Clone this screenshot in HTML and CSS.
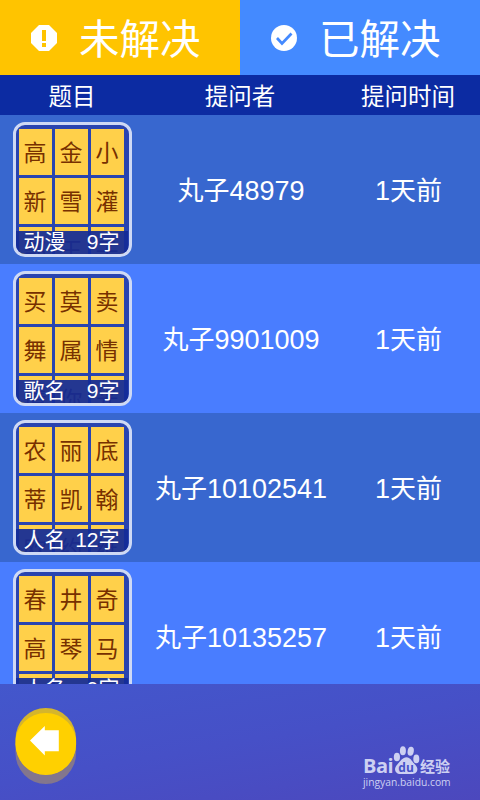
FILE: index.html
```
<!DOCTYPE html>
<html lang="zh-CN">
<head>
<meta charset="utf-8">
<title>题目列表</title>
<link rel="stylesheet" href="styles.css">
</head>
<body>
<div class="app">
  <nav class="tabs">
    <div class="tab tab-open">
      <svg class="tab-icon" viewBox="0 0 26 26"><path fill="#fff" d="M8 0h10l8 8v10l-8 8H8l-8-8V8z"/><path fill="#ffc400" d="M11 5h4v11h-4zM11 18h4v4h-4z"/></svg>
      <span>未解决</span>
    </div>
    <div class="tab tab-done">
      <svg class="tab-icon" viewBox="0 0 26 26"><circle cx="13" cy="13" r="13" fill="#fff"/><path fill="none" stroke="#448aff" stroke-width="2.7" d="M6 13l5 5.500L20.500 8.500"/></svg>
      <span>已解决</span>
    </div>
  </nav>
  <div class="columns head"><span>题目</span><span>提问者</span><span>提问时间</span></div>
  <main class="list">
    <div class="columns row">
      <div class="card">
        <div class="tiles"><i>高</i><i>金</i><i>小</i><i>新</i><i>雪</i><i>灌</i><i>部</i><i>王</i><i>子</i></div>
        <div class="caption"><span>动漫</span><span>9字</span></div>
      </div>
      <span class="cell"><b>丸子</b>48979</span><span class="cell">1<b>天前</b></span>
    </div>
    <div class="columns row alt">
      <div class="card">
        <div class="tiles"><i>买</i><i>莫</i><i>卖</i><i>舞</i><i>属</i><i>情</i><i>情</i><i>你</i><i>光</i></div>
        <div class="caption"><span>歌名</span><span>9字</span></div>
      </div>
      <span class="cell"><b>丸子</b>9901009</span><span class="cell">1<b>天前</b></span>
    </div>
    <div class="columns row">
      <div class="card">
        <div class="tiles"><i>农</i><i>丽</i><i>底</i><i>蒂</i><i>凯</i><i>翰</i><i>欧</i><i>约</i><i>维</i></div>
        <div class="caption"><span>人名</span><span>12字</span></div>
      </div>
      <span class="cell"><b>丸子</b>10102541</span><span class="cell">1<b>天前</b></span>
    </div>
    <div class="columns row alt">
      <div class="card">
        <div class="tiles"><i>春</i><i>井</i><i>奇</i><i>高</i><i>琴</i><i>马</i><i></i><i></i><i></i></div>
        <div class="caption"><span>人名</span><span>9字</span></div>
      </div>
      <span class="cell"><b>丸子</b>10135257</span><span class="cell">1<b>天前</b></span>
    </div>
  </main>
  <footer class="footer">
    <svg class="back" viewBox="0 0 62 77">
      <defs><clipPath id="disc"><path d="M.5 31a30.300 31 0 0 1 60.600 0v5a30.300 31 0 0 1-60.600 0z"/></clipPath></defs>
      <path fill="#83768d" d="M.5 36h60.600v9a30.300 31 0 0 1-60.600 0z"/>
      <g clip-path="url(#disc)"><path fill="#d5b52c" d="M0 0h62v67H0z"/><ellipse cx="30.800" cy="36" rx="30.800" ry="31" fill="#ffd000"/></g>
      <path fill="#fff" d="M15 32.500L29.800 18v4.300h14v21h-14v4.200z"/>
    </svg>
    <div class="brand">
      <div class="brand-main">
        <span class="bai">Bai</span>
        <svg class="paw" viewBox="0 0 26 29"><g fill="#cdd0f2"><ellipse cx="3.400" cy="11" rx="3.100" ry="4.300"/><ellipse cx="9.400" cy="4.800" rx="3" ry="4.500"/><ellipse cx="17.200" cy="5.200" rx="3.100" ry="4.500" transform="rotate(10 17.200 5.200)"/><ellipse cx="22.800" cy="12.900" rx="3" ry="4.300"/><path d="M13 11.200c4 0 5.500 4.500 8.500 7.300 4.500 4.200 2 9.500-2.500 9.500H6.800c-5 0-7.300-5.200-3-9.600C6.500 15.500 9 11.200 13 11.200z"/></g><text class="du" x="12.600" y="25.500" text-anchor="middle">du</text></svg>
        <span class="exp">经验</span>
      </div>
      <div class="brand-url">jingyan.baidu.com</div>
    </div>
  </footer>
</div>
</body>
</html>
```
FILE: styles.css
```
* { box-sizing: border-box; }
body { margin: 0; }
.app {
  width: 480px; height: 800px; overflow: hidden;
  display: flex; flex-direction: column;
  color: #fff;
  font-family: "Liberation Sans", "Noto Sans CJK SC", sans-serif;
}
.tabs { display: flex; height: 75px; flex: none; }
.tab {
  flex: 1; display: flex; align-items: center;
  padding: 5px 0 0 31px; font-size: 40.5px; line-height: 60px; white-space: nowrap;
}
.tab span { margin-left: 22px; }
.tab-open { background: #ffc400; }
.tab-done { background: #448aff; }
.tab-icon { width: 26px; height: 26px; flex: none; margin-top: -5px; }
.columns {
  display: grid; grid-template-columns: 144px 192px 144px;
  justify-items: center; align-items: center; flex: none;
}
.head { height: 40px; background: #0c2ba2; font-size: 23.5px; line-height: 38px; padding-top: 3px; }
.list { height: 569px; overflow: hidden; flex: none; }
.row { height: 149px; background: #3867cf; font-size: 27px; align-items: start; }
.alt { background: #497dff; }
.cell { line-height: 40px; margin-top: 56px; white-space: nowrap; }
.cell b { font-weight: normal; font-size: 26px; }
.row .cell:nth-child(2) { margin-left: 2px; }
.row .cell:last-child { margin-left: 1px; }
.card {
  position: relative; width: 119px; height: 135px; margin-top: 7px;
  border: 3px solid #ced9f5; border-radius: 12px; background: #2944b0;
  overflow: hidden; padding: 4px 0 0 3px;
}
.tiles {
  display: grid; grid-template-columns: repeat(3, 33px);
  grid-auto-rows: 46px; gap: 3px;
}
.tiles i {
  background: #ffd04a; color: #773000; font-style: normal;
  font-size: 23px; line-height: 48px; height: 46px; text-align: center;
}
.caption {
  position: absolute; left: -1px; right: 1px; top: 106px; bottom: 0;
  display: flex; justify-content: space-between; padding: 0 8px 0 9px;
  background: rgba(19, 43, 151, .93); font-size: 21px; line-height: 22px;
}
.footer {
  flex: 1; display: flex; justify-content: space-between;
  padding: 24px 29px 0 15px;
  background: linear-gradient(170deg, #4357cc 0%, #4650c7 50%, #4c48bd 100%);
}
.back { width: 62px; height: 77px; flex: none; }
.brand { width: 88px; margin-top: 38px; color: #cdd0f2; }
.brand-main { display: flex; height: 29px; align-items: flex-end; }
.bai { font: bold 20px/20px "Open Sans", sans-serif; width: 29px; margin-bottom: -1px; letter-spacing: -.5px; }
.paw { width: 27px; height: 29px; flex: none; margin-left: 1px; }
.du { font: bold 12px "Open Sans", sans-serif; fill: #4651c7; }
.exp { font: bold 15px/18px "Noto Sans CJK SC", sans-serif; margin-bottom: 0; white-space: nowrap; }
.brand-url { font: 10.3px/15px "Open Sans", sans-serif; white-space: nowrap; }
```
